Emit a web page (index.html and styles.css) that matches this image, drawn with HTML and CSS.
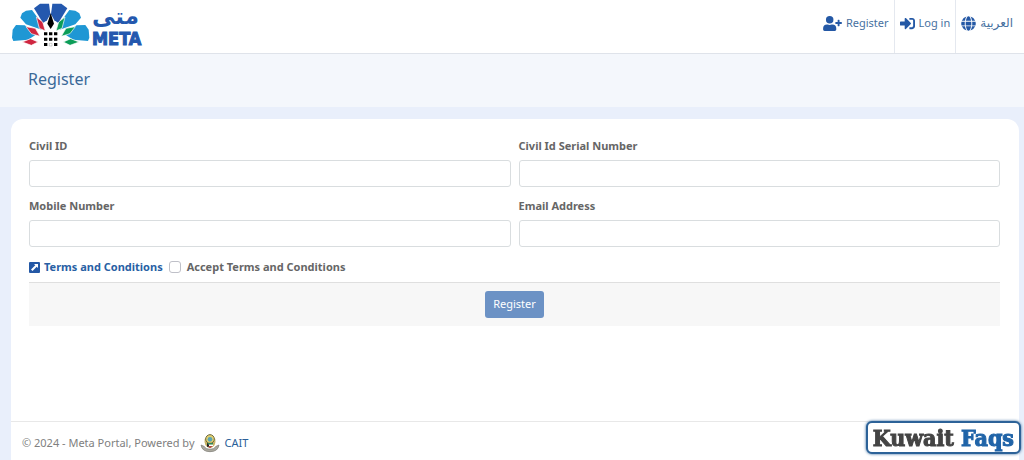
FILE: index.html
```html
<!DOCTYPE html>
<html lang="en">
<head>
<meta charset="utf-8">
<title>Register</title>
<link rel="stylesheet" href="styles.css">
</head>
<body>
<header class="topbar">
  <a class="brand" href="#" aria-label="Meta">
    <svg class="brand-fan" viewBox="36 8 234 132" aria-hidden="true">
      <g fill="#2458ae"><path d="M102 24 120 10 147 10 151 42 141 60 129 68Z"/><path d="M202 24 184 10 157 10 153 42 163 60 175 68Z"/></g>
      <g fill="#1f97d4"><path d="M61 52 66 39 78 31 96 29 114 54 125 88 108 82 78 72Z"/><path d="M243 52 238 39 226 31 208 29 190 54 179 88 196 82 226 72Z"/><path d="M36 112 38 88 48 74 74 75 110 102 84 118 40 122Z"/><path d="M268 112 266 88 256 74 230 75 194 102 220 118 264 122Z"/></g>
      <g fill="#cf2640" stroke="#fff" stroke-width="2"><path d="M109 50 128 65 136 92 118 84Z"/><path d="M78 79 106 84 120 108 94 100Z"/><path d="M67 125 92 115 114 125 94 135Z"/></g>
      <g fill="#0c9d58" stroke="#fff" stroke-width="2"><path d="M195 50 176 65 168 92 186 84Z"/><path d="M226 79 198 84 184 108 210 100Z"/><path d="M237 125 212 115 190 125 210 135Z"/></g>
      <path d="M152 38 162 70 152 86 142 70Z"/>
      <path d="M132 96h10v9h-10zM147 96h10v9h-10zM162 96h10v9h-10zM132 112h10v9h-10zM147 112h10v9h-10zM162 112h10v9h-10zM132 128h10v9h-10zM162 128h10v9h-10z"/>
      <path d="M148 129h8v8h-8z" fill="#fff" stroke="#777"/>
    </svg>
    <span class="brand-name"><span class="brand-ar" lang="ar">متى</span><span class="brand-en">META</span></span>
  </a>
  <nav class="nav">
    <a class="nav-link" href="#"><svg class="icon-user" viewBox="0 0 640 512"><path d="M224 256a128 128 0 1 0 0-256 128 128 0 0 0 0 256zm90 32h-17a174 174 0 0 1-146 0h-17A134 134 0 0 0 0 422v42c0 27 21 48 48 48h352c27 0 48-21 48-48v-42a134 134 0 0 0-134-134zm310-80h-64v-64c0-9-7-16-16-16h-32c-9 0-16 7-16 16v64h-64c-9 0-16 7-16 16v32c0 9 7 16 16 16h64v64c0 9 7 16 16 16h32c9 0 16-7 16-16v-64h64c9 0 16-7 16-16v-32c0-9-7-16-16-16z"/></svg><span>Register</span></a>
    <a class="nav-link" href="#"><svg class="icon" viewBox="0 0 512 512"><path d="M416 448h-84c-7 0-12-5-12-12v-40c0-7 5-12 12-12h84c18 0 32-14 32-32V160c0-18-14-32-32-32h-84c-7 0-12-5-12-12V76c0-7 5-12 12-12h84c53 0 96 43 96 96v192c0 53-43 96-96 96zm-47-209L201 71c-15-15-41-4-41 17v96H24c-13 0-24 11-24 24v96c0 13 11 24 24 24h136v96c0 22 26 32 41 17l168-168c9-9 9-25 0-34z"/></svg><span>Log in</span></a>
    <a class="nav-link" href="#" lang="ar"><svg class="icon" viewBox="0 0 496 512"><path d="M336 160C322 70 288 8 248 8s-74 62-88 152zm-184 96c0 22 1 44 3 64h186a613 613 0 0 0 0-128H155c-2 20-3 42-3 64zm325-96A249 249 0 0 0 315 17c25 34 43 87 52 143zM181 17A248 248 0 0 0 19 160h110c9-56 27-109 52-143zm306 175H373a683 683 0 0 1 0 128h114a248 248 0 0 0 0-128zM120 256c0-22 1-43 3-64H9a248 248 0 0 0 0 128h114c-2-21-3-42-3-64zm40 96c14 90 48 152 88 152s74-62 88-152zm155 143a249 249 0 0 0 162-143H367c-9 56-27 109-52 143zM19 352a249 249 0 0 0 162 143c-25-34-43-87-52-143z"/></svg><span class="nav-ar">العربية</span></a>
  </nav>
</header>
<div class="page-title"><h1>Register</h1></div>
<main class="panel">
  <form class="form">
    <div class="fields">
      <div class="field"><label for="civil">Civil ID</label><input id="civil" type="text"></div>
      <div class="field"><label for="serial">Civil Id Serial Number</label><input id="serial" type="text"></div>
      <div class="field"><label for="mobile">Mobile Number</label><input id="mobile" type="tel"></div>
      <div class="field"><label for="email">Email Address</label><input id="email" type="email"></div>
    </div>
    <div class="terms">
      <a class="terms-link" href="#"><svg class="icon-ext" viewBox="0 0 11 11"><rect width="11" height="11" rx="1"/><path d="M5 2h4v4L7.7 4.700 3.500 9 2 7.500 6.300 3.300Z" fill="#fff"/></svg>Terms and Conditions</a>
      <input id="accept" class="check" type="checkbox"><label for="accept">Accept Terms and Conditions</label>
    </div>
    <div class="actions"><button class="submit" type="submit">Register</button></div>
  </form>
  <footer class="footer">
    <span>© 2024 - Meta Portal, Powered by</span>
    <svg class="crest" viewBox="0 0 60 60" aria-hidden="true"><path d="M3 36q3 20 27 20t27-20l-9 4q-5 9-18 9t-18-9z" fill="#aaa89e" stroke="#77766e" stroke-width="2"/><path d="M14 18q-4 22 16 28Q50 40 46 18L30 4Z" fill="#c9b568"/><circle cx="30" cy="18" r="13" fill="#dfcf72" stroke="#726c3e" stroke-width="3"/><circle cx="30" cy="19" r="7" fill="#5ba5b5"/><path d="M21 30h18v5H21z" fill="#328857"/><path d="M21 35h18v4H21z" fill="#fff"/><path d="M22 39h16l-8 7z" fill="#b34845"/><path d="M21 30l6 5v5l-6 2z" fill="#222"/></svg>
    <a href="#">CAIT</a>
  </footer>
</main>
<div class="badge"><span>Kuwait</span> <span class="badge-blue">Faqs</span></div>
</body>
</html>
```
FILE: styles.css
```css
* { box-sizing: border-box; }
body {
  margin: 0;
  min-height: 100vh;
  display: flex;
  flex-direction: column;
  background: #e9effb;
  color: #666;
  font: 11px/18px "Noto Sans", "DejaVu Sans", sans-serif;
}
a { color: #2a6099; text-decoration: none; }
.topbar {
  display: flex;
  justify-content: space-between;
  height: 54px;
  padding: 0 6px 0 12px;
  background: #fff;
  border-bottom: 1px solid #dfe3ea;
  box-shadow: 0 1px 2px #e3e7ee;
}
.brand { display: flex; align-items: flex-start; gap: 2px; padding-top: 3px; }
.brand-fan { width: 78px; height: 44px; }
.brand-name { display: flex; flex-direction: column; color: #2458ae; }
.brand-ar { font: 700 23px/27px "DejaVu Sans", sans-serif; }
.brand-en {
  font: 700 18px/18px "DejaVu Sans Condensed", "DejaVu Sans", sans-serif;
  -webkit-text-stroke: 1px #2458ae;
}
.nav { display: flex; }
.nav-link {
  display: flex;
  align-items: center;
  gap: 4px;
  padding: 0 5px 7px;
  border-left: 1px solid #e4e8ef;
  color: #47719f;
}
.nav-link:first-child { border-left: 0; }
.nav-ar { font-size: 12px; }
.icon, .icon-user { height: 15px; fill: #2458a5; }
.icon { width: 15px; }
.icon-user { width: 19px; }
.page-title { padding: 13px 28px 15px; background: #f4f7fc; }
h1 { margin: 0; color: #3a6998; font-size: 16px; line-height: 25px; font-weight: 400; }
.panel {
  flex: 1;
  display: flex;
  flex-direction: column;
  margin: 12px 5px 0 11px;
  background: #fff;
  border-radius: 12px 12px 0 0;
}
.form { flex: 1; padding: 18px 19px 18px 18px; }
.fields { display: grid; grid-template-columns: 1fr 1fr; gap: 10px 8px; }
.field { display: flex; flex-direction: column; gap: 5px; }
label, .terms-link { font-weight: 700; }
.field input {
  width: 100%;
  height: 27px;
  border: 1px solid #d9dddf;
  border-radius: 3px;
  background: #fff;
}
.terms { display: flex; align-items: center; padding: 11px 0 6px; }
.terms-link { display: flex; align-items: center; gap: 4px; color: #2860a4; }
.icon-ext { width: 11px; height: 11px; fill: #2458a5; }
.check {
  appearance: none;
  width: 12px;
  height: 12px;
  margin: 0 6px;
  border: 1px solid #bfc0c8;
  border-radius: 3px;
  background: #fff;
}
.actions { display: flex; justify-content: center; padding: 8px; background: #f7f7f7; border-top: 1px solid #dfdfdf; }
.submit {
  padding: 4px 8px 5px;
  border: 0;
  border-radius: 3px;
  background: #6c92c5;
  color: #fff;
  font: 11px/18px "Noto Sans", sans-serif;
}
.footer {
  display: flex;
  align-items: center;
  gap: 5px;
  padding: 10px 11px 6px;
  border-top: 1px solid #e8e8e8;
  color: #808080;
}
.crest { width: 20px; height: 22px; }
.badge {
  position: fixed;
  right: 3px;
  bottom: 6px;
  padding: 0 5px;
  border: 2px solid #2c6298;
  border-radius: 6px;
  background: #fff;
  box-shadow: 0 0 3px #2c6298;
  color: #444;
  font: 700 23px/29px "DejaVu Serif Condensed", "DejaVu Serif", serif;
  -webkit-text-stroke: 1px;
}
.badge-blue { color: #2064a8; }
```
